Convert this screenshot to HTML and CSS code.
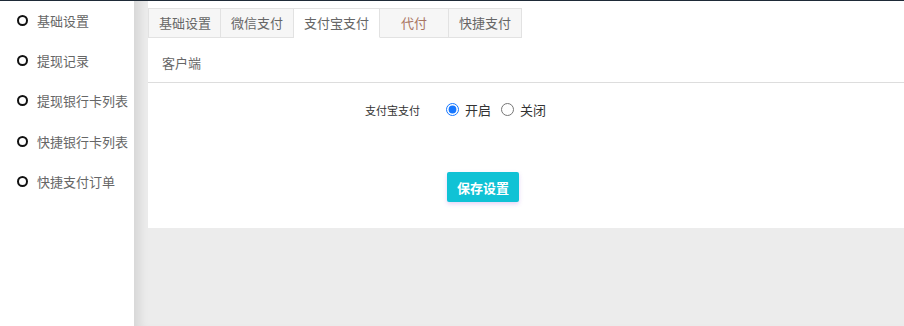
FILE: index.html
```html
<!DOCTYPE html>
<html lang="zh-CN">
<head>
    <meta charset="UTF-8">
    <meta name="viewport" content="width=device-width, initial-scale=1.0">
    <title>支付设置</title>
    <link rel="stylesheet" href="styles.css">
</head>
<body>
    <div class="topline"></div>
    <div class="layout">
        <ul class="side-menu">
            <li><span class="dot"></span>基础设置</li>
            <li><span class="dot"></span>提现记录</li>
            <li><span class="dot"></span>提现银行卡列表</li>
            <li><span class="dot"></span>快捷银行卡列表</li>
            <li><span class="dot"></span>快捷支付订单</li>
        </ul>

        <div class="main">
            <div class="panel">
                <ul class="tabs">
                    <li>基础设置</li>
                    <li>微信支付</li>
                    <li class="active">支付宝支付</li>
                    <li class="warn">代付</li>
                    <li>快捷支付</li>
                </ul>
                <div class="sub-tab">客户端</div>

                <form class="settings">
                    <div class="form-row">
                        <label class="form-label">支付宝支付</label>
                        <div class="form-input">
                            <label class="radio"><input type="radio" name="alipay" checked> 开启</label>
                            <label class="radio"><input type="radio" name="alipay"> 关闭</label>
                        </div>
                    </div>
                    <div class="form-actions">
                        <button type="button" class="save-button">保存设置</button>
                    </div>
                </form>
            </div>
        </div>
    </div>
</body>
</html>
```

FILE: styles.css
```css
body {
    margin: 0;
    font-family: "Noto Sans CJK SC", "Noto Sans", Arial, sans-serif;
    font-size: 13px;
    color: #666;
    background-color: #ececec;
}
ul {
    list-style: none;
    margin: 0;
    padding: 0;
}
.topline {
    height: 1px;
    background-color: #1e2a37;
}
.layout {
    display: flex;
    height: 325px;
}
.side-menu {
    width: 134px;
    background-color: #fff;
}
.side-menu li {
    display: flex;
    align-items: center;
    height: 40.5px;
    padding-left: 17px;
    white-space: nowrap;
}
.side-menu li:first-child {
    height: 39px;
}
.dot {
    width: 7px;
    height: 7px;
    border: 2px solid #111;
    border-radius: 50%;
    margin-right: 9px;
}
.main {
    flex: 1;
    padding-left: 14px;
    box-shadow: inset 12px 0 10px -6px rgba(0, 0, 0, 0.09);
}
.panel {
    background-color: #fff;
    padding-top: 7px;
    padding-bottom: 26px;
}
.tabs {
    display: flex;
}
.tabs li {
    min-width: 48px;
    height: 28px;
    line-height: 28px;
    padding: 0 10px;
    text-align: center;
    background-color: #f6f6f6;
    border: 1px solid #e2e2e2;
    border-left: none;
}
.tabs li:first-child {
    border-left: 1px solid #e2e2e2;
    padding-right: 9px;
}
.tabs li.active {
    background-color: #fff;
    border-bottom-color: #fff;
}
.tabs li.warn {
    color: #a87462;
}
.sub-tab {
    padding: 15px 14px 9px;
    line-height: 20px;
    border-bottom: 1px solid #ddd;
}
.settings {
    padding-top: 17px;
}
.form-row {
    display: flex;
    align-items: center;
}
.form-label {
    width: 272px;
    text-align: right;
    font-size: 11px;
    color: #333;
}
.form-input {
    display: flex;
    gap: 10px;
    margin-left: 26px;
    color: #333;
}
.radio {
    display: flex;
    align-items: center;
}
.radio input {
    margin: 0 6px 0 0;
    accent-color: #1677ff;
}
.form-actions {
    margin-top: 53px;
    padding-left: 299px;
}
.save-button {
    width: 72px;
    height: 30px;
    padding: 0;
    border: none;
    border-radius: 2px;
    background-color: #10c2d5;
    color: #fff;
    font-family: inherit;
    font-size: 13px;
    font-weight: bold;
    box-shadow: 0 2px 4px rgba(170, 110, 230, 0.3);
    cursor: pointer;
}
```
